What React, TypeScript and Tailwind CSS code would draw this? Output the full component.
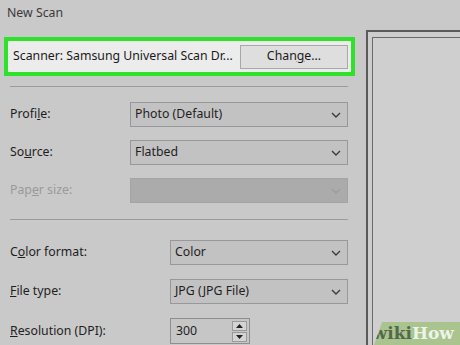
import React from "react"

const font = { fontFamily: '"Noto Sans", "Open Sans", sans-serif' }

const Chevron = ({ dim }: { dim?: boolean }) => (
  <svg width="10" height="6" viewBox="0 0 10 6" className="mr-[6px]">
    <polyline points="1,1 5,5 9,1" fill="none" stroke={dim ? "#9c9c9c" : "#3c3c3c"} strokeWidth="1.4" />
  </svg>
)

type RowProps = {
  label: React.ReactNode
  value?: string
  left: string
  disabled?: boolean
}

const SelectRow = ({ label, value, left, disabled }: RowProps) => (
  <div className="flex items-center h-[25px]">
    <div className={`${left} shrink-0 pl-[10px] text-[12.3px] ${disabled ? "text-[#9a9a9a]" : "text-[#1e1e1e]"}`}>{label}</div>
    <div
      className={`flex-1 h-[25px] flex items-center justify-between border ${
        disabled ? "bg-[#ababab] border-[#a4a4a4]" : "bg-[#c2c2c2] border-[#989898]"
      }`}
    >
      <span className="pl-[4px] text-[12.3px] text-[#1e1e1e]">{value}</span>
      <Chevron dim={disabled} />
    </div>
  </div>
)

export default function App() {
  return (
    <div className="w-[460px] h-[345px] overflow-hidden bg-[#c9c9c9] flex relative" style={font}>
      <div className="w-[366px] shrink-0 flex flex-col">
        <div className="h-[30px] pl-[7px] pt-[4px] text-[12.3px] text-[#3a3a3a]">New Scan</div>

        <div className="mt-[7px] ml-[4px] mr-[11px] h-[39px] border-[4px] border-[#2ee22a] bg-[#ececec] flex items-center justify-between pl-[5px] pr-[3px]">
          <span className="text-[12.3px] text-[#1a1a1a] whitespace-nowrap">Scanner: Samsung Universal Scan Dr...</span>
          <button className="w-[108px] h-[24px] bg-[#dedede] border border-[#a8a8a8] text-[12.3px] text-[#1a1a1a]">
            Chan<span className="underline">g</span>e...
          </button>
        </div>

        <div className="mt-[10px] mx-[10px] mr-[18px] h-px bg-[#9c9c9c]" />

        <div className="mt-[15px] mr-[18px] flex flex-col gap-[13px]">
          <SelectRow left="w-[130px]" label={<>Profi<span className="underline">l</span>e:</>} value="Photo (Default)" />
          <SelectRow left="w-[130px]" label={<>So<span className="underline">u</span>rce:</>} value="Flatbed" />
          <SelectRow left="w-[130px]" label={<>Pap<span className="underline">e</span>r size:</>} disabled />
        </div>

        <div className="mt-[16px] mx-[10px] mr-[18px] h-px bg-[#9c9c9c]" />

        <div className="mt-[20px] mr-[18px] flex flex-col gap-[14px]">
          <SelectRow left="w-[170px]" label={<>C<span className="underline">o</span>lor format:</>} value="Color" />
          <SelectRow left="w-[170px]" label={<><span className="underline">F</span>ile type:</>} value="JPG (JPG File)" />
          <div className="flex items-center h-[26px]">
            <div className="w-[170px] shrink-0 pl-[10px] text-[12.3px] text-[#1e1e1e]">
              <span className="underline">R</span>esolution (DPI):
            </div>
            <div className="w-[80px] h-[26px] bg-[#c6c6c6] border border-[#8e8e8e] flex items-center justify-between pr-[2px]">
              <span className="pl-[5px] text-[12.3px] text-[#1e1e1e]">300</span>
              <div className="flex flex-col gap-[1px]">
                <div className="w-[15px] h-[10px] bg-[#d4d4d4] border border-[#9a9a9a] flex items-center justify-center">
                  <svg width="7" height="4" viewBox="0 0 7 4"><polygon points="0,4 3.5,0 7,4" fill="#222" /></svg>
                </div>
                <div className="w-[15px] h-[10px] bg-[#d4d4d4] border border-[#9a9a9a] flex items-center justify-center">
                  <svg width="7" height="4" viewBox="0 0 7 4"><polygon points="0,0 3.5,4 7,0" fill="#222" /></svg>
                </div>
              </div>
            </div>
          </div>
        </div>
      </div>

      <div className="flex-1 mt-[30px] border-l-2 border-t-2 border-[#5a5a5a] pl-[4px] pt-[5px] bg-[#cdcdcd]">
        <div className="h-full border-l border-t border-[#6a6a6a] bg-[#cfcfcf]" />
      </div>

      <div
        className="absolute right-0 bottom-0 w-[86px] h-[23px] bg-[#a9c48f] flex items-center justify-end pr-[6px]"
        style={{ clipPath: "polygon(8px 0, 100% 0, 100% 100%, 0 100%)" }}
      >
        <span className="text-[17px] font-bold leading-none" style={{ fontFamily: '"DejaVu Serif", "Liberation Serif", serif' }}>
          <span className="text-[#55684a]">wiki</span>
          <span className="text-[#eef3e8]">How</span>
        </span>
      </div>
    </div>
  )
}
